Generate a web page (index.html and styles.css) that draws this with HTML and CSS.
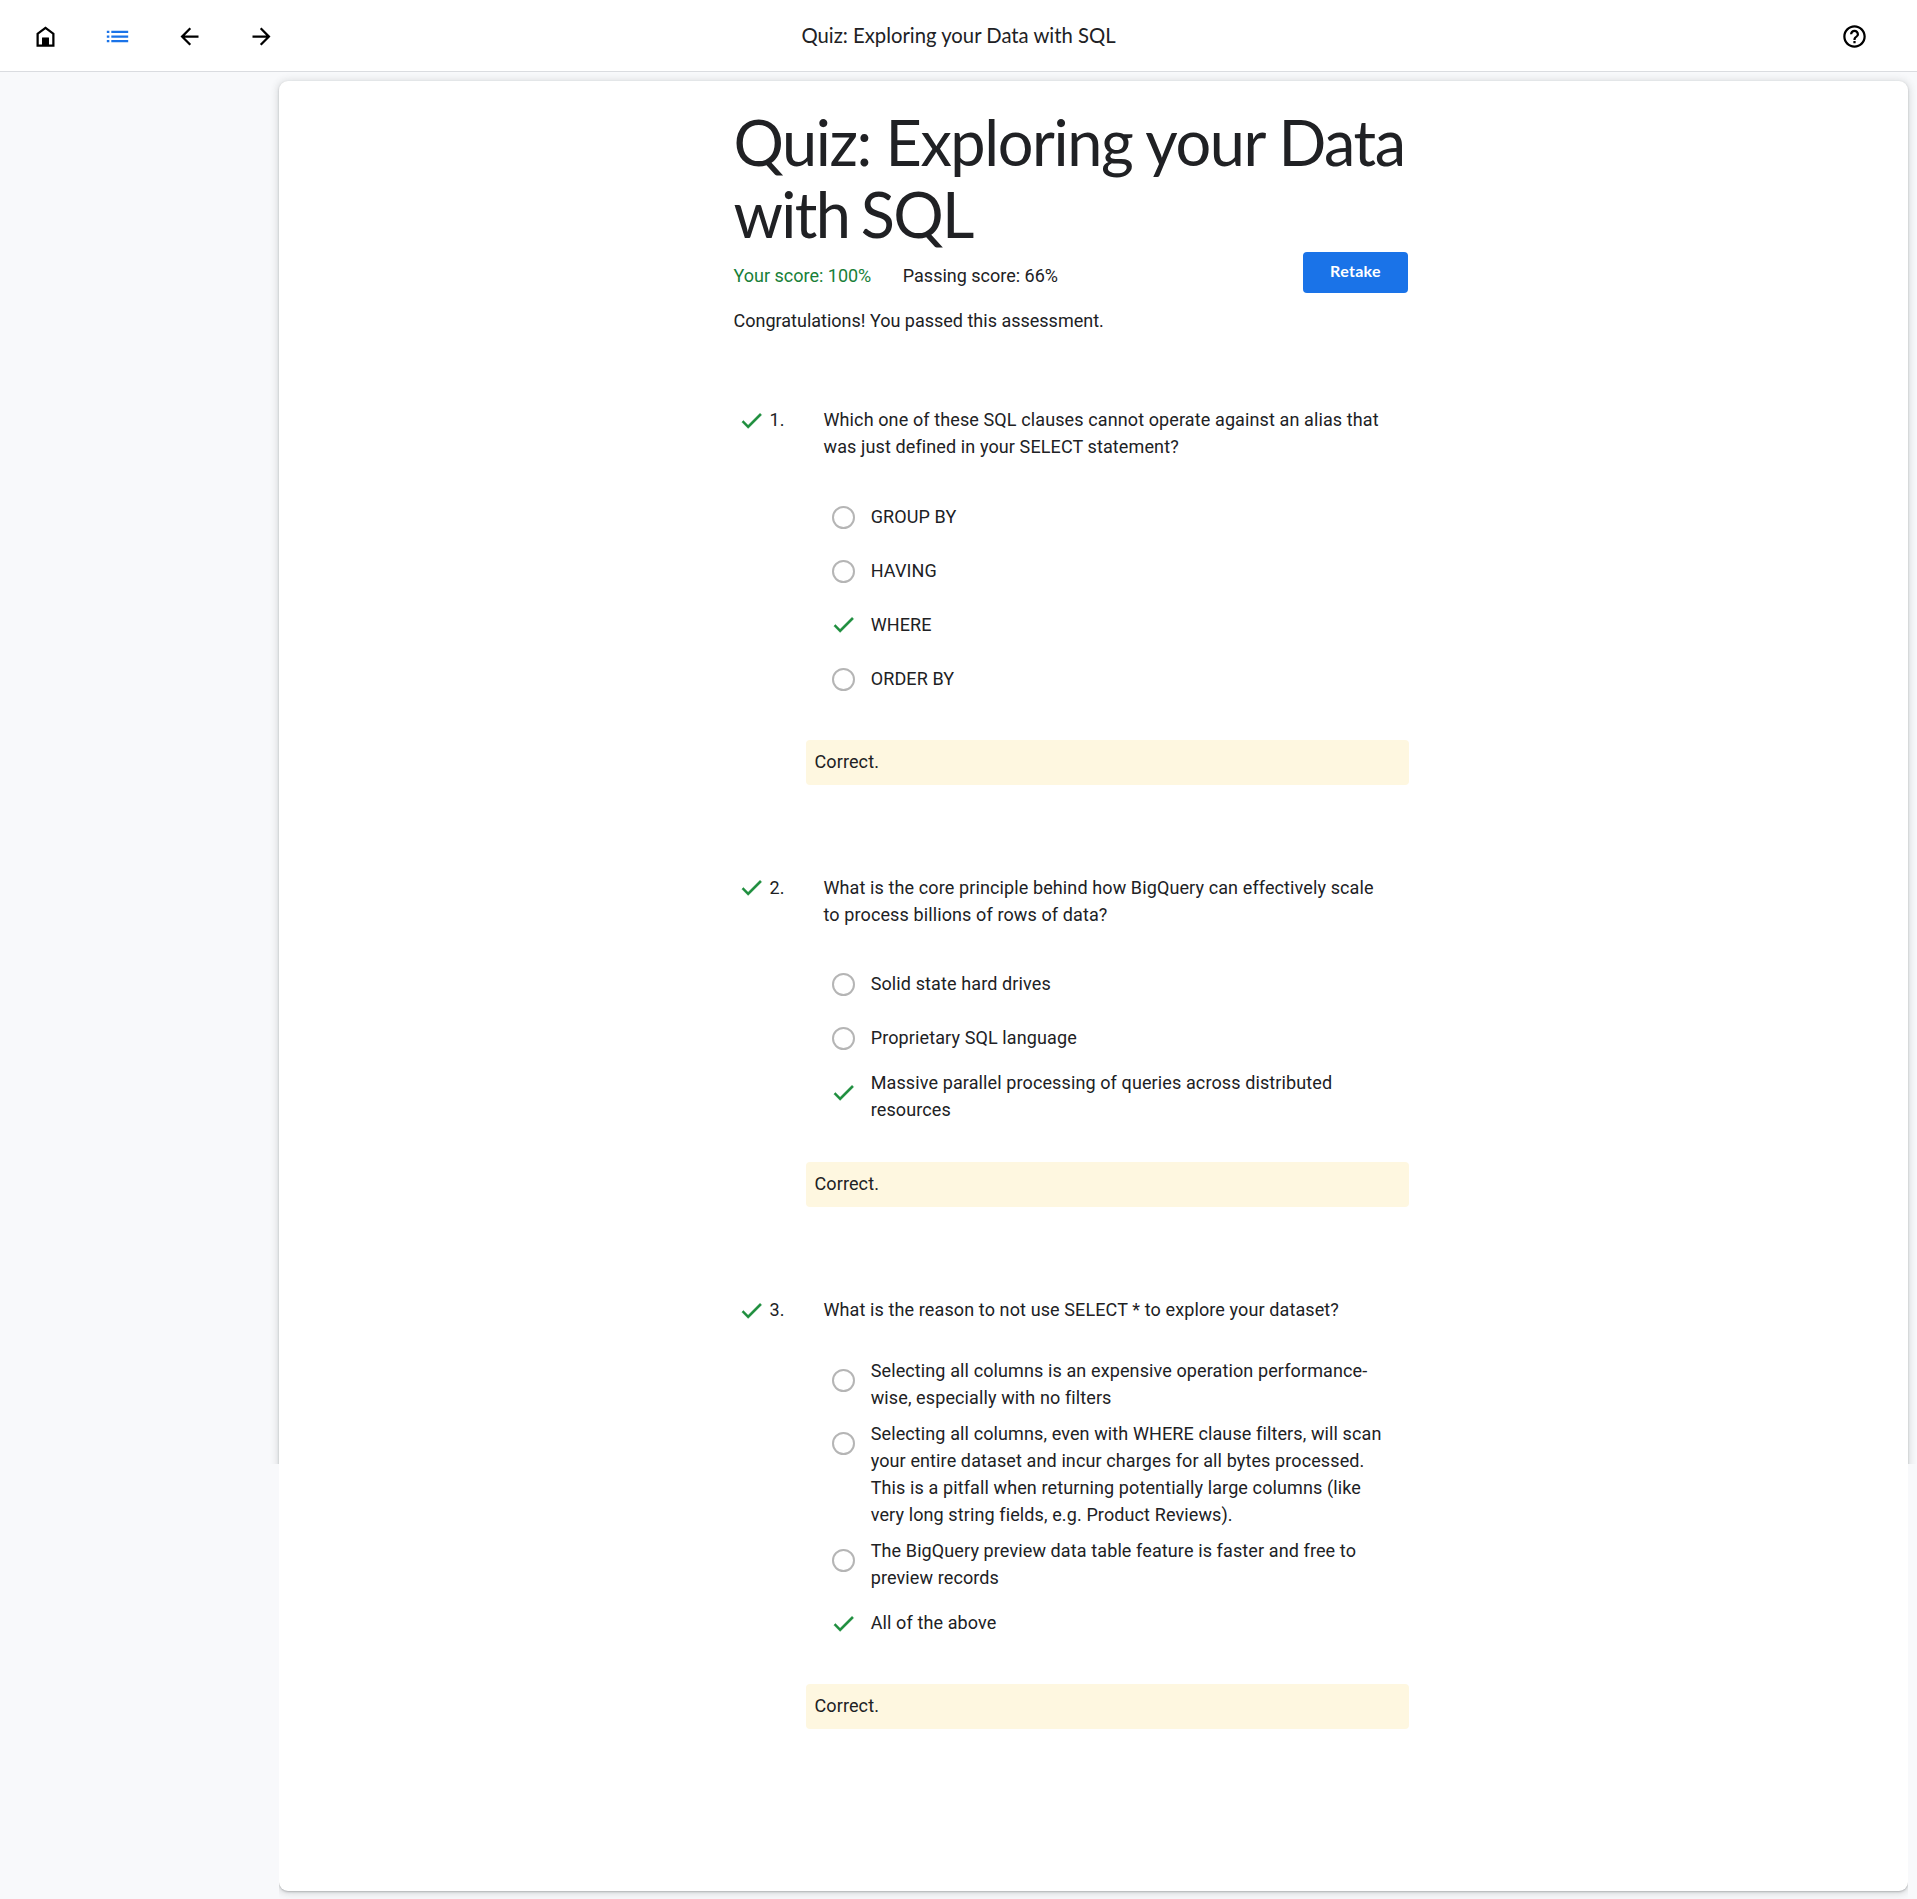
FILE: index.html
```
<!DOCTYPE html>
<html lang="en">
<head>
<meta charset="utf-8">
<title>Quiz: Exploring your Data with SQL</title>
<link rel="stylesheet" href="styles.css">
</head>
<body>
<svg width="0" height="0" class="defs" aria-hidden="true">
  <symbol id="check" viewBox="0 0 24 24"><path d="M9 16.17L4.83 12l-1.42 1.41L9 19 21 7l-1.41-1.41z"/></symbol>
</svg>
<header class="topbar">
  <nav class="nav">
    <svg class="icon" viewBox="0 0 24 24"><path d="M12 3L4 9v12h16V9l-8-6zm6 16h-3v-6H9v6H6v-9l6-4.5 6 4.5v9z"/><path d="M9 13h6v7H9z"/></svg>
    <svg class="icon icon-active" viewBox="0 0 24 24"><path d="M2.500 6.800h2.250v2H2.500zM2.500 11h2.250v2H2.500zM2.500 15.100h2.250v2H2.500zM6.500 6.800h15v2h-15zM6.500 11h15v2h-15zM6.500 15.100h15v2h-15z"/></svg>
    <svg class="icon" viewBox="0 0 24 24"><path d="M20 11H7.830l5.590-5.590L12 4l-8 8 8 8 1.410-1.410L7.830 13H20v-2z"/></svg>
    <svg class="icon" viewBox="0 0 24 24"><path d="M12 4l-1.410 1.410L16.170 11H4v2h12.170l-5.580 5.590L12 20l8-8z"/></svg>
  </nav>
  <div class="topbar-title">Quiz: Exploring your Data with SQL</div>
  <div class="help"><svg class="icon" viewBox="0 0 24 24"><path d="M11 18h2v-2h-2v2zm1-16C6.480 2 2 6.480 2 12s4.480 10 10 10 10-4.480 10-10S17.520 2 12 2zm0 18c-4.410 0-8-3.590-8-8s3.590-8 8-8 8 3.590 8 8-3.590 8-8 8zm0-14c-2.210 0-4 1.790-4 4h2c0-1.100.9-2 2-2s2 .9 2 2c0 2-3 1.750-3 5h2c0-2.250 3-2.500 3-5 0-2.210-1.790-4-4-4z"/></svg></div>
</header>
<main class="card">
  <div class="content">
    <h1 class="title"><span class="title-a">Quiz: Exploring your Data</span><br><span class="title-b">with SQL</span></h1>
    <div class="scores">
      <span class="score-own">Your score: 100%</span>
      <span>Passing score: 66%</span>
      <button class="retake">Retake</button>
    </div>
    <p class="message">Congratulations! You passed this assessment.</p>

    <section class="question">
      <div class="prompt"><svg class="mark"><use href="#check"/></svg><span class="num">1.</span><p>Which one of these SQL clauses cannot operate against an alias that<br>was just defined in your SELECT statement?</p></div>
      <ul class="options">
        <li><i class="radio"></i><span>GROUP BY</span></li>
        <li><i class="radio"></i><span>HAVING</span></li>
        <li><svg class="tick"><use href="#check"/></svg><span>WHERE</span></li>
        <li><i class="radio"></i><span>ORDER BY</span></li>
      </ul>
      <div class="feedback">Correct.</div>
    </section>

    <section class="question">
      <div class="prompt"><svg class="mark"><use href="#check"/></svg><span class="num">2.</span><p>What is the core principle behind how BigQuery can effectively scale<br>to process billions of rows of data?</p></div>
      <ul class="options">
        <li><i class="radio"></i><span>Solid state hard drives</span></li>
        <li><i class="radio"></i><span>Proprietary SQL language</span></li>
        <li><svg class="tick"><use href="#check"/></svg><span>Massive parallel processing of queries across distributed<br>resources</span></li>
      </ul>
      <div class="feedback">Correct.</div>
    </section>

    <section class="question">
      <div class="prompt"><svg class="mark"><use href="#check"/></svg><span class="num">3.</span><p>What is the reason to not use SELECT * to explore your dataset?</p></div>
      <ul class="options">
        <li><i class="radio"></i><span>Selecting all columns is an expensive operation performance-<br>wise, especially with no filters</span></li>
        <li><i class="radio"></i><span>Selecting all columns, even with WHERE clause filters, will scan<br>your entire dataset and incur charges for all bytes processed.<br>This is a pitfall when returning potentially large columns (like<br>very long string fields, e.g. Product Reviews).</span></li>
        <li><i class="radio"></i><span>The BigQuery preview data table feature is faster and free to<br>preview records</span></li>
        <li><svg class="tick"><use href="#check"/></svg><span>All of the above</span></li>
      </ul>
      <div class="feedback">Correct.</div>
    </section>
  </div>
</main>
</body>
</html>
```
FILE: styles.css
```
* { box-sizing: border-box; }

body {
  margin: 0;
  height: 1899px;
  overflow: hidden;
  background: #f8f9fb;
  color: #202124;
  font: 18px/27px Roboto, "Noto Sans", sans-serif;
}

p, h1, ul { margin: 0; padding: 0; }
.defs { display: block; }

.topbar {
  display: grid;
  grid-template-columns: 1fr auto 1fr;
  align-items: center;
  height: 72px;
  padding: 0 49px;
  background: #fff;
  border-bottom: 1px solid #dadce0;
}

.nav { display: flex; gap: 45px; margin-left: -17.5px; padding-top: 2px; }
.help { display: flex; justify-content: flex-end; padding-top: 2px; }
.icon { display: block; width: 27px; height: 27px; fill: #000; }
.icon-active { fill: #1a73e8; }
.topbar-title { font: 20.25px/27px Lato, sans-serif; }

.card {
  position: relative;
  z-index: 0;
  width: 1629px;
  height: 1810px;
  margin: 9px 0 0 279px;
  border-radius: 9px;
  background: #fff;
}

/* The side shadow ends above the fold; the lower one only follows the bottom edge. */
.card::before,
.card::after {
  content: "";
  position: absolute;
  inset: 0;
  z-index: -1;
  border-radius: 9px;
  background: #fff;
  box-shadow: 0 1px 2px rgba(60, 64, 67, .3), 0 1px 7px 2px rgba(60, 64, 67, .15);
}
.card::before { clip-path: inset(-9px -8px 427px -12px); }
.card::after { clip-path: inset(1801px 0 -12px 0); }

.content { width: 675px; margin-left: 454.5px; padding-top: 25px; }

.title {
  font: 400 63px/72px Lato, sans-serif;
  white-space: nowrap;
}
.title-a { letter-spacing: -1.43px; }
.title-b { letter-spacing: -1.65px; word-spacing: -3px; }

.scores { display: flex; align-items: flex-start; padding-top: 2px; height: 50px; white-space: nowrap; }
.scores span { margin: 10px 31.5px 0 0; }
.scores .score-own { color: #188038; }

.retake {
  width: 105px;
  height: 41px;
  margin: 0 .5px 0 auto;
  padding: 0 0 3px;
  border: 0;
  border-radius: 4px;
  background: #1a73e8;
  color: #fff;
  font: 700 16px/38px Lato, sans-serif;
  letter-spacing: .3px;
}

.message { padding-top: 7px; }

.question { margin-top: 72px; letter-spacing: .1125px; }
.question + .question { margin-top: 89px; }

.prompt { display: grid; grid-template-columns: 36px 54px 1fr; white-space: nowrap; }
.mark,
.tick { width: 27px; height: 27px; fill: #1e8e3e; stroke: #1e8e3e; stroke-width: .35px; }
.mark { margin: .8px 0 -.8px 4.800px; }

.options { list-style: none; margin: 29.6px 0 34px 98.5px; }
.options li { display: flex; gap: 15.700px; min-height: 54px; padding: 4.1px 0 4.9px; white-space: nowrap; }
.options li > span { align-self: center; }
.radio { flex: none; width: 23px; height: 23px; margin-top: 11.9px; border: 2px solid #b5b5b5; border-radius: 50%; }
.tick { flex: none; margin: 9.700px -2.300px 0 -1.700px; }

.feedback {
  width: 603px;
  height: 45px;
  margin-left: 72px;
  padding: 8px 9px;
  border-radius: 4px;
  background: #fef7e0;
}
```
